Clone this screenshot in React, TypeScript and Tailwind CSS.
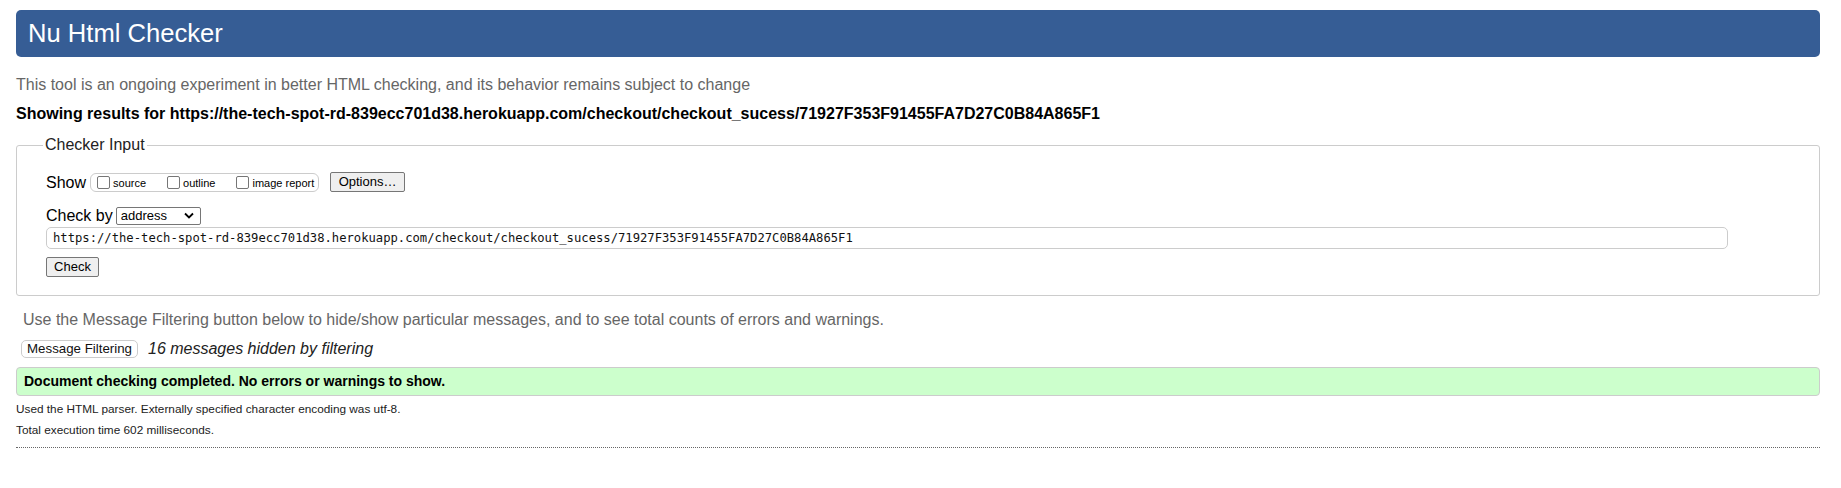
import React from "react";

const url =
  "https://the-tech-spot-rd-839ecc701d38.herokuapp.com/checkout/checkout_sucess/71927F353F91455FA7D27C0B84A865F1";

// small fake checkbox, looks like the chrome one
const Box = () => (
  <span className="inline-block w-[13px] h-[13px] border border-[#767676] rounded-[2px] bg-white shrink-0"></span>
);

const ShowOption = ({ label }: { label: string }) => (
  <span className="flex items-center gap-[3px]">
    <Box />
    <span className="text-[11px] leading-[12px] mt-[2px]">{label}</span>
  </span>
);

export default function App() {
  return (
    <div className="min-h-[488px] bg-white pl-4 pr-[21px] pt-[10px] text-black font-['Liberation_Sans',Arial,sans-serif]">
      <h1 className="h-[47px] flex items-center pl-3 bg-[#365d95] rounded-[5px] text-white text-[25.6px] font-normal">
        Nu Html Checker
      </h1>
      <p className="mt-[18px] leading-[19px] text-[16px] text-[#666]">
        This tool is an ongoing experiment in better HTML checking, and its behavior remains subject to change
      </p>
      <p className="mt-[10px] leading-[19px] text-[16px] font-bold">Showing results for {url}</p>

      {/* Checker input form */}
      <fieldset className="mt-[13px] border border-[#ccc] rounded-[3px] pl-[29px] pr-4 pt-[18px] pb-[17px]">
        <legend className="ml-[-3px] px-[2px] text-[16px] leading-[18px] text-[#222]">Checker Input</legend>
        <div className="flex items-center h-[20px]">
          <span className="text-[16px] leading-[19px]">Show</span>
          <div className="ml-[4px] h-[19px] w-[229px] flex items-center gap-[21px] pl-[6px] border border-[#ccc] rounded-[6px]">
            <ShowOption label="source" />
            <ShowOption label="outline" />
            <ShowOption label="image report" />
          </div>
          <button className="ml-[11px] h-[20px] w-[75px] bg-[#efefef] border border-[#767676] rounded-[2px] text-[13px] leading-[16px]">
            Options…
          </button>
        </div>
        <div className="mt-[15px] flex items-center h-[17px]">
          <span className="text-[16px] leading-[19px]">Check by</span>
          <div className="ml-[3px] h-[18px] w-[85px] flex items-center justify-between px-[4px] border border-[#767676] rounded-[2px] bg-white">
            <span className="text-[13px] leading-[15px]">address</span>
            <svg width="10" height="7" viewBox="0 0 10 7" className="mr-[2px]">
              <path d="M1 1.5 L5 5.5 L9 1.5" fill="none" stroke="#000" strokeWidth="1.8" />
            </svg>
          </div>
        </div>
        <div className="mt-[3px] h-[22px] w-[1682px] flex items-center pl-[6px] border border-[#ccc] rounded-[5px] font-['DejaVu_Sans_Mono',monospace] text-[12.2px] text-[#111]">
          {url}
        </div>
        <button className="mt-[8px] h-[20px] w-[53px] bg-[#efefef] border border-[#767676] rounded-[2px] text-[13px] leading-[16px]">
          Check
        </button>
      </fieldset>

      <p className="mt-[14px] pl-[7px] leading-[19px] text-[16px] text-[#666]">
        Use the Message Filtering button below to hide/show particular messages, and to see total counts of errors and warnings.
      </p>
      <div className="mt-[10px] h-[19px] flex items-center">
        <button className="ml-[5px] h-[18px] w-[117px] bg-white border border-[#ccc] rounded-[5px] text-[13.3px] leading-[15px] text-[#111]">
          Message Filtering
        </button>
        <span className="ml-[10px] italic text-[16px] leading-[19px] text-[#222]">16 messages hidden by filtering</span>
      </div>

      <div className="mt-[9px] h-[29px] flex items-center pl-[7px] bg-[#ccffcc] border border-[#ccc] rounded-[4px] text-[14px] font-bold">
        Document checking completed. No errors or warnings to show.
      </div>
      <p className="mt-[6px] text-[11.8px] leading-[14px] text-[#222]">
        Used the HTML parser. Externally specified character encoding was utf-8.
      </p>
      <p className="mt-[7px] text-[11.8px] leading-[14px] text-[#222]">Total execution time 602 milliseconds.</p>
      <hr className="mt-[10px] border-0 border-t border-dotted border-[#666]" />
    </div>
  );
}
